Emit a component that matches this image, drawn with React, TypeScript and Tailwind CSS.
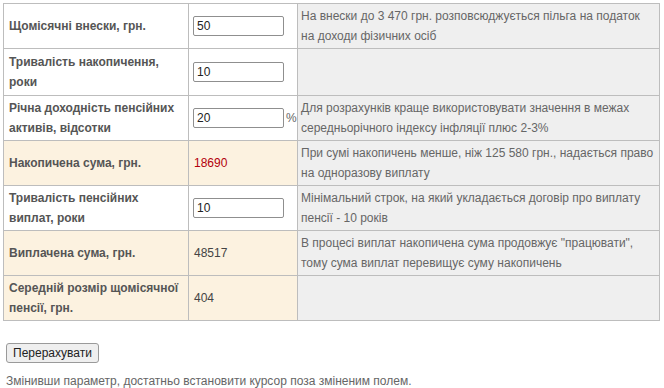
const rows = [
  {
    label: "Щомісячні внески, грн.",
    input: "50",
    note: "На внески до 3 470 грн. розповсюджується пільга на податок на доходи фізичних осіб",
    cream: false,
    h: "h-[45px]",
  },
  { label: "Тривалість накопичення, роки", input: "10", note: "", cream: false, h: "h-[47px]" },
  {
    label: "Річна доходність пенсійних активів, відсотки",
    input: "20",
    pct: true,
    note: "Для розрахунків краще використовувати значення в межах середньорічного індексу інфляції плюс 2-3%",
    cream: false,
    h: "h-[45px]",
  },
  {
    label: "Накопичена сума, грн.",
    value: "18690",
    red: true,
    note: "При сумі накопичень менше, ніж 125 580 грн., надається право на одноразову виплату",
    cream: true,
    h: "h-[45px]",
  },
  {
    label: "Тривалість пенсійних виплат, роки",
    input: "10",
    note: "Мінімальний строк, на який укладається договір про виплату пенсії - 10 років",
    cream: false,
    h: "h-[45px]",
  },
  {
    label: "Виплачена сума, грн.",
    value: "48517",
    note: 'В процесі виплат накопичена сума продовжує "працювати", тому сума виплат перевищує суму накопичень',
    cream: true,
    h: "h-[45px]",
  },
  { label: "Середній розмір щомісячної пенсії, грн.", value: "404", note: "", cream: true, h: "h-[45px]" },
];

export default function App() {
  return (
    <div className="min-h-[388px] bg-white pl-[3px] pt-[3px] text-[12px] leading-[20px] font-['Liberation_Sans',Arial,sans-serif] text-[#333]">
      <table className="w-[657px] border-collapse border border-[#bdbdbd] table-fixed">
        <colgroup>
          <col className="w-[185px]" />
          <col className="w-[109px]" />
          <col />
        </colgroup>
        <tbody>
          {rows.map((r) => (
            <tr key={r.label} className={r.cream ? "bg-[#fcf2e0]" : "bg-white"}>
              <td className={`${r.h} border border-[#bdbdbd] px-[5px] py-[2px] align-middle font-bold text-[#555]`}>
                {r.label}
              </td>
              <td className="border border-[#bdbdbd] pl-[4px] py-[2px] align-middle">
                {r.input !== undefined ? (
                  <span className="flex items-center gap-[2px]">
                    <input
                      readOnly
                      value={r.input}
                      className="h-[20px] w-[91px] rounded-[2px] border border-[#8f8f8f] bg-white px-[3px] text-[12px] text-[#222] outline-none"
                    />
                    {r.pct && <span className="text-[#666]">%</span>}
                  </span>
                ) : (
                  <span className={r.red ? "pl-[1px] text-[#b3000c]" : "pl-[1px] text-[#444]"}>{r.value}</span>
                )}
              </td>
              <td className="border border-[#bdbdbd] bg-[#efefef] px-[3px] py-[2px] align-middle text-[#666]">
                {r.note}
              </td>
            </tr>
          ))}
        </tbody>
      </table>
      <div className="mt-[22px] pl-[3px]">
        <button className="h-[20px] rounded-[3px] border border-[#9a9a9a] bg-[#efefef] px-[6px] text-[12px] leading-[18px] text-[#222]">
          Перерахувати
        </button>
      </div>
      <p className="mt-[11px] pl-[3px] leading-[14px] text-[#666]">
        Змінивши параметр, достатньо встановити курсор поза зміненим полем.
      </p>
    </div>
  );
}
